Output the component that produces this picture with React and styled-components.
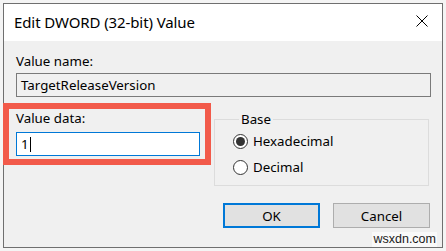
import React from "react";
import styled, { createGlobalStyle } from "styled-components";

const Global = createGlobalStyle`
  html, body { margin: 0; padding: 0; background: #f4f4f4; }
  body { font-family: "Noto Sans", "Open Sans", sans-serif; }
  * { box-sizing: border-box; }
`;

const Page = styled.div`
  width: 446px;
  height: 251px;
  padding: 3px 0 0 3px;
  overflow: hidden;
`;

const Window = styled.div`
  position: relative;
  width: 440px;
  height: 245px;
  border: 1px solid #6f6f6f;
  background: #f0f0f0;
  display: flex;
  flex-direction: column;
`;

const TitleBar = styled.div`
  height: 37px;
  background: #ffffff;
  display: flex;
  align-items: center;
  justify-content: space-between;
  padding: 0 14px 1px 10px;
`;

const Title = styled.div`
  font-size: 15px;
  color: #000;
  letter-spacing: -0.1px;
`;

const CloseIcon = styled.svg`
  width: 12px;
  height: 12px;
  margin-top: -2px;
`;

const Body = styled.div`
  flex: 1;
  padding: 12px 11px 0 12px;
  display: flex;
  flex-direction: column;
  font-size: 13.3px;
`;

const Label = styled.div`
  font-size: 13.3px;
  line-height: 16px;
  color: #000;
`;

const TextBox = styled.div`
  margin-top: ${(p) => p.$gap || 4}px;
  height: 24px;
  width: 100%;
  border: 1px solid ${(p) => (p.$focused ? "#0078d7" : "#7a7a7a")};
  background: ${(p) => (p.$focused ? "#ffffff" : "#f0f0f0")};
  display: flex;
  align-items: center;
  padding-left: 4px;
  font-size: 13.3px;
  color: #000;
`;

const Caret = styled.span`
  display: inline-block;
  width: 1px;
  height: 15px;
  background: #000;
  margin-left: 1px;
`;

const Row = styled.div`
  margin-top: 13px;
  display: grid;
  grid-template-columns: 184px 215px;
  column-gap: 14px;
`;

const DataSection = styled.div`
  position: relative;
`;

const Highlight = styled.div`
  position: absolute;
  left: -13px;
  top: -7px;
  width: 208px;
  height: 62px;
  border: 6px solid #f25a4a;
  pointer-events: none;
`;

const Group = styled.fieldset`
  margin: 0;
  margin-top: 2px;
  height: 74px;
  border: 1px solid #dcdcdc;
  padding: 6px 0 0 18px;
  display: flex;
  flex-direction: column;
  gap: 8px;
`;

const Legend = styled.legend`
  font-size: 13.3px;
  padding: 0 2px;
  margin-left: 6px;
  line-height: 14px;
`;

const RadioRow = styled.div`
  display: flex;
  align-items: center;
  gap: 5px;
  font-size: 13.3px;
  height: 18px;
`;

const RadioCircle = styled.span`
  width: 15px;
  height: 15px;
  border-radius: 50%;
  border: 1px solid #333;
  background: #fff;
  display: flex;
  align-items: center;
  justify-content: center;
  &::after {
    content: "";
    display: ${(p) => (p.$checked ? "block" : "none")};
    width: 9px;
    height: 9px;
    border-radius: 50%;
    background: #333;
  }
`;

const Buttons = styled.div`
  margin-top: 17px;
  display: flex;
  justify-content: flex-end;
  gap: 13px;
  padding-right: 1px;
`;

const Button = styled.div`
  width: 97px;
  height: 25px;
  background: #e1e1e1;
  border: ${(p) => (p.$default ? "2px solid #0078d7" : "1px solid #adadad")};
  display: flex;
  align-items: center;
  justify-content: center;
  font-size: 13.3px;
  color: #000;
`;

const Watermark = styled.div`
  position: absolute;
  right: 5px;
  bottom: 0px;
  font-family: "Liberation Sans", Arial, sans-serif;
  font-size: 12.5px;
  line-height: 15px;
  color: #1a1a1a;
  background: rgba(255, 255, 255, 0.6);
  padding: 0 1px;
`;

export default function App() {
  return (
    <Page>
      <Global />
      <Window>
        <TitleBar>
          <Title>Edit DWORD (32-bit) Value</Title>
          <CloseIcon viewBox="0 0 12 12">
            <path d="M0.5 0.5 L11.5 11.5 M11.5 0.5 L0.5 11.5" stroke="#000" strokeWidth="1" fill="none" />
          </CloseIcon>
        </TitleBar>
        <Body>
          <Label>Value name:</Label>
          <TextBox>TargetReleaseVersion</TextBox>
          <Row>
            <DataSection>
              <Highlight />
              <Label>Value data:</Label>
              <TextBox $focused $gap={6}>
                1<Caret />
              </TextBox>
            </DataSection>
            <Group>
              <Legend>Base</Legend>
              <RadioRow>
                <RadioCircle $checked />
                Hexadecimal
              </RadioRow>
              <RadioRow>
                <RadioCircle />
                Decimal
              </RadioRow>
            </Group>
          </Row>
          <Buttons>
            <Button $default>OK</Button>
            <Button>Cancel</Button>
          </Buttons>
        </Body>
        <Watermark>wsxdn.com</Watermark>
      </Window>
    </Page>
  );
}
